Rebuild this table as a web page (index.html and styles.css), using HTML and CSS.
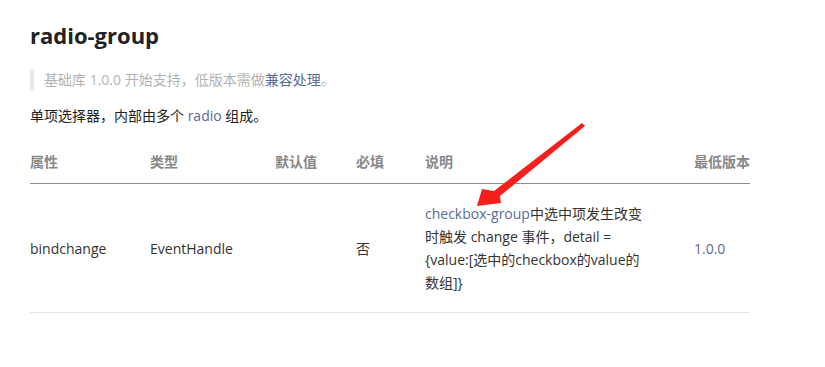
FILE: index.html
```html
<!DOCTYPE html>
<html>
<head>
<meta charset="utf-8">
<link rel="stylesheet" href="styles.css">
</head>
<body>
<div class="page">
  <h1 class="title">radio-group</h1>
  <blockquote class="tip">基础库 1.0.0 开始支持，低版本需做<a class="link" href="#">兼容处理</a>。</blockquote>
  <p class="desc">单项选择器，内部由多个 <a class="link" href="#">radio</a> 组成。</p>
  <table class="props">
    <colgroup>
      <col class="c1"><col class="c2"><col class="c3"><col class="c4"><col class="c5"><col class="c6">
    </colgroup>
    <thead>
      <tr><th>属性</th><th>类型</th><th>默认值</th><th>必填</th><th>说明</th><th>最低版本</th></tr>
    </thead>
    <tbody>
      <tr>
        <td>bindchange</td>
        <td>EventHandle</td>
        <td></td>
        <td>否</td>
        <td class="explain"><a class="link" href="#">checkbox-group</a>中选中项发生改变时触发 change 事件，detail = {value:[选中的checkbox的value的数组]}</td>
        <td><a class="link" href="#">1.0.0</a></td>
      </tr>
    </tbody>
  </table>
</div>
<svg class="arrow" width="825" height="367" viewBox="0 0 825 367">
  <polygon fill="#f5201c" points="582,123 585,126 500,196 501,203 477,206 482,189 494,191"/>
</svg>
</body>
</html>
```

FILE: styles.css
```css
html, body {
  margin: 0;
  padding: 0;
  background: #fff;
}
body {
  font-family: "Open Sans", "Noto Sans CJK SC", sans-serif;
  font-size: 14px;
  color: #333;
  position: relative;
}
.page {
  padding: 19px 30px 0 30px;
  width: 720px;
}
.title {
  margin: 0;
  font-size: 22px;
  line-height: 32px;
  font-weight: 700;
  color: #222;
}
.tip {
  margin: 18px 0 0 0;
  padding: 0 0 0 10px;
  border-left: 4px solid #e9e9e9;
  color: #b2b2b2;
  line-height: 22px;
}
.link {
  color: #576b95;
  text-decoration: none;
}
.desc {
  margin: 14px 0 0 0;
  line-height: 22px;
  color: #222;
}
.props {
  margin-top: 13px;
  width: 720px;
  border-collapse: collapse;
  table-layout: fixed;
}
.c1 { width: 120px; }
.c2 { width: 125px; }
.c3 { width: 81px; }
.c4 { width: 69px; }
.c5 { width: 269px; }
.c6 { width: 56px; }
.props th {
  text-align: left;
  font-weight: 700;
  color: #888;
  padding: 11px 0 10px 0;
  line-height: 22px;
  border-bottom: 1px solid #8c8c8c;
  white-space: nowrap;
}
.props td {
  padding: 18px 0 18px 0;
  line-height: 23px;
  vertical-align: middle;
  border-bottom: 1px solid #e6e6e6;
  color: #333;
}
.props td.explain {
  padding-right: 48px;
}
.arrow {
  position: absolute;
  left: 0;
  top: 0;
  pointer-events: none;
}
```
